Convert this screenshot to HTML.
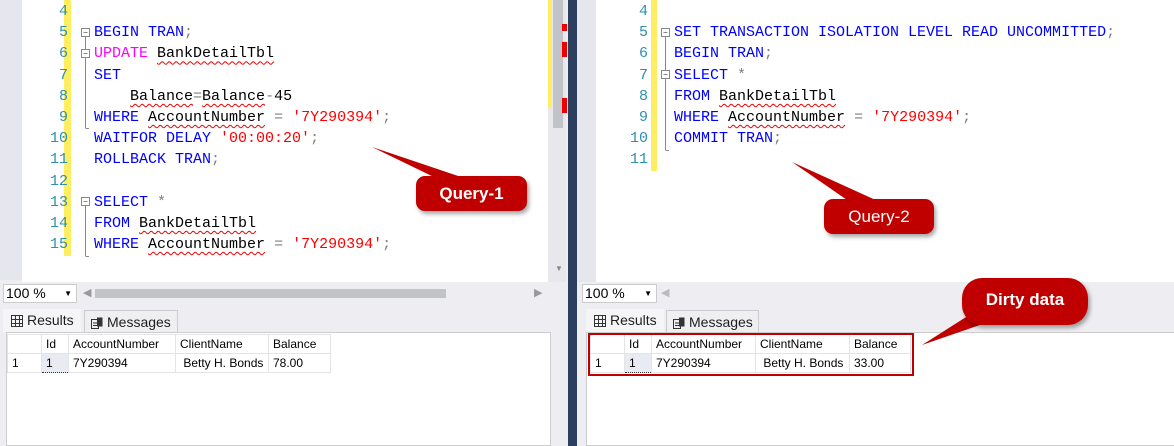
<!DOCTYPE html>
<html><head><meta charset="utf-8"><style>
*{margin:0;padding:0;box-sizing:border-box}
body{width:1174px;height:446px;overflow:hidden;background:#eeeef2;position:relative;font-family:"Liberation Sans",sans-serif}
.abs{position:absolute}
.code{font-family:"Liberation Mono",monospace;font-size:15px;line-height:21.2px;white-space:pre}
.ln{color:#2b91af;text-align:right}
.k{color:#0000ff}.m{color:#ff00ff}.s{color:#ff0000}.g{color:#808080}
.u{text-decoration:underline wavy #e00;text-decoration-thickness:1px;text-underline-offset:3px}
.tab{position:absolute;font-size:14px;color:#1e1e1e;border:1px solid #ccc;border-bottom:none;padding:3px 6px;background:#f5f5f5;white-space:nowrap;line-height:17px}
.tab svg{vertical-align:-2px;margin-right:4px}
table{border-collapse:collapse;font-size:12px;position:absolute}
td{border:1px solid #e4e4e4;height:19px;padding:0 4px;white-space:nowrap}
.callout{position:absolute;background:#c00000;color:#fff;font-size:17px;font-weight:bold;text-align:center;border-radius:9px;box-shadow:2px 3px 4px rgba(0,0,0,.35)}
</style></head><body>
<div class="abs" style="left:0;top:0;width:22px;height:280px;background:#e6e7ec"></div>
<div class="abs" style="left:22px;top:0;width:526px;height:282px;background:#fff"></div>
<div class="abs" style="left:64px;top:0;width:7px;height:256px;background:#ffee62"></div>
<div class="abs code ln" style="left:22px;top:1px;width:46px">4
5
6
7
8
9
10
11
12
13
14
15</div>
<div class="abs code" style="left:94px;top:1px">
<span class="k">BEGIN TRAN</span><span class="g">;</span>
<span class="m">UPDATE</span> <span class="u">BankDetailTbl</span>
<span class="k">SET</span>
    <span class="u">Balance</span><span class="g">=</span><span class="u">Balance</span><span class="g">-</span>45
<span class="k">WHERE</span> <span class="u">AccountNumber</span> <span class="g">=</span> <span class="s">'7Y290394'</span><span class="g">;</span>
<span class="k">WAITFOR DELAY</span> <span class="s">'00:00:20'</span><span class="g">;</span>
<span class="k">ROLLBACK TRAN</span><span class="g">;</span>

<span class="k">SELECT</span> <span class="g">*</span>
<span class="k">FROM</span> <span class="u">BankDetailTbl</span>
<span class="k">WHERE</span> <span class="u">AccountNumber</span> <span class="g">=</span> <span class="s">'7Y290394'</span><span class="g">;</span></div>
<svg class="abs" style="left:78px;top:0" width="14" height="260">
<g fill="#fff" stroke="#888">
<rect x="3.5" y="28.5" width="8" height="8"/><rect x="3.5" y="49.5" width="8" height="8"/><rect x="3.5" y="197.5" width="8" height="8"/></g>
<g stroke="#888"><line x1="5.5" y1="32.5" x2="9.5" y2="32.5"/><line x1="5.5" y1="53.5" x2="9.5" y2="53.5"/><line x1="5.5" y1="201.5" x2="9.5" y2="201.5"/>
<line x1="7.5" y1="37" x2="7.5" y2="49"/><line x1="7.5" y1="58" x2="7.5" y2="128"/><line x1="7.5" y1="128.5" x2="11" y2="128.5"/>
<line x1="7.5" y1="206" x2="7.5" y2="256"/><line x1="7.5" y1="256.5" x2="11" y2="256.5"/></g></svg>
<div class="abs" style="left:548px;top:0;width:18px;height:282px;background:#e8e8ec"></div>
<div class="abs" style="left:548px;top:0;width:4px;height:108px;background:#ffee62"></div>
<div class="abs" style="left:553px;top:0;width:10px;height:128px;background:#c2c3c9"></div>
<div class="abs" style="left:562px;top:24px;width:5px;height:7px;background:#e00"></div>
<div class="abs" style="left:562px;top:42px;width:5px;height:15px;background:#e00"></div>
<div class="abs" style="left:562px;top:98px;width:5px;height:15px;background:#e00"></div>
<div class="abs" style="left:555px;top:264px;color:#888;font-size:8px">▼</div>
<div class="abs" style="left:568px;top:0;width:9px;height:446px;background:#2d3f5f"></div>
<div class="abs" style="left:3px;top:284px;width:74px;height:19px;background:#fff;border:1px solid #ccc;font-size:14px;padding-left:2px;line-height:17px">100 %<span style="position:absolute;right:4px;font-size:8px">▼</span></div>
<div class="abs" style="left:83px;top:286px;color:#999;font-size:11px">◀</div>
<div class="abs" style="left:95px;top:289px;width:351px;height:9px;background:#c2c3c9"></div>
<div class="abs" style="left:534px;top:286px;color:#999;font-size:11px">▶</div>
<div class="tab" style="left:2px;top:308px;width:80px;height:24px;background:#f5f5f7;border-color:#eeeef2;padding-left:8px"><svg width="12" height="12"><rect x=".5" y=".5" width="11" height="11" fill="none" stroke="#333"/><path d="M0 4.5H12M0 8.5H12M4.5 0V12M8.5 0V12" stroke="#333"/></svg>Results</div>
<div class="tab" style="left:84px;top:310px;width:94px;height:22px;background:#efeff2"><svg width="12" height="12"><rect x=".5" y="2.5" width="7" height="9" fill="none" stroke="#333"/><rect x="6" y=".5" width="5.5" height="9" fill="#333"/><path d="M2 6H6M2 8.5H6" stroke="#333"/></svg>Messages</div>
<div class="abs" style="left:6px;top:332px;width:545px;height:114px;background:#fff;border:1px solid #ccc"></div>
<table style="left:7px;top:334px">
<tr><td style="width:34px"></td><td style="width:27px">Id</td><td style="width:107px">AccountNumber</td><td style="width:93px">ClientName</td><td style="width:62px">Balance</td></tr>
<tr><td>1</td><td style="background:#e8ecf2;border:1px dotted #333">1</td><td>7Y290394</td><td>&nbsp;Betty H. Bonds</td><td>78.00</td></tr></table>
<div class="abs" style="left:577px;top:0;width:19px;height:282px;background:#e6e7ec"></div>
<div class="abs" style="left:596px;top:0;width:578px;height:282px;background:#fff"></div>
<div class="abs" style="left:651px;top:0;width:6px;height:171px;background:#ffee62"></div>
<div class="abs code ln" style="left:596px;top:1px;width:52px">4
5
6
7
8
9
10
11</div>
<div class="abs code" style="left:674px;top:1px">
<span class="k">SET TRANSACTION ISOLATION LEVEL READ UNCOMMITTED</span><span class="g">;</span>
<span class="k">BEGIN TRAN</span><span class="g">;</span>
<span class="k">SELECT</span> <span class="g">*</span>
<span class="k">FROM</span> <span class="u">BankDetailTbl</span>
<span class="k">WHERE</span> <span class="u">AccountNumber</span> <span class="g">=</span> <span class="s">'7Y290394'</span><span class="g">;</span>
<span class="k">COMMIT TRAN</span><span class="g">;</span></div>
<svg class="abs" style="left:658px;top:0" width="14" height="180">
<g fill="#fff" stroke="#888"><rect x="3.5" y="28.5" width="8" height="8"/><rect x="3.5" y="70.5" width="8" height="8"/></g>
<g stroke="#888"><line x1="5.5" y1="32.5" x2="9.5" y2="32.5"/><line x1="5.5" y1="74.5" x2="9.5" y2="74.5"/>
<line x1="7.5" y1="37" x2="7.5" y2="70"/><line x1="7.5" y1="79" x2="7.5" y2="150"/><line x1="7.5" y1="150.5" x2="11" y2="150.5"/></g></svg>
<div class="abs" style="left:582px;top:284px;width:75px;height:19px;background:#fff;border:1px solid #ccc;font-size:14px;padding-left:2px;line-height:17px">100 %<span style="position:absolute;right:4px;font-size:8px">▼</span></div>
<div class="abs" style="left:661px;top:286px;color:#bbb;font-size:11px">◀</div>
<div class="tab" style="left:585px;top:308px;width:80px;height:24px;background:#f5f5f7;border-color:#eeeef2;padding-left:8px"><svg width="12" height="12"><rect x=".5" y=".5" width="11" height="11" fill="none" stroke="#333"/><path d="M0 4.5H12M0 8.5H12M4.5 0V12M8.5 0V12" stroke="#333"/></svg>Results</div>
<div class="tab" style="left:666px;top:310px;width:93px;height:22px;background:#efeff2"><svg width="12" height="12"><rect x=".5" y="2.5" width="7" height="9" fill="none" stroke="#333"/><rect x="6" y=".5" width="5.5" height="9" fill="#333"/><path d="M2 6H6M2 8.5H6" stroke="#333"/></svg>Messages</div>
<div class="abs" style="left:586px;top:332px;width:588px;height:114px;background:#fff;border:1px solid #ccc;border-right:none"></div>
<table style="left:590px;top:334px">
<tr><td style="width:34px"></td><td style="width:27px">Id</td><td style="width:104px">AccountNumber</td><td style="width:94px">ClientName</td><td style="width:61px">Balance</td></tr>
<tr><td>1</td><td style="background:#e8ecf2;border:1px dotted #333">1</td><td>7Y290394</td><td>&nbsp;Betty H. Bonds</td><td>33.00</td></tr></table>
<div class="abs" style="left:588px;top:333px;width:326px;height:43px;border:2px solid #c00000"></div>
<svg class="abs" style="left:0;top:0" width="1174" height="446">
<g fill="#c00000">
<polygon points="372,147 440,180 470,180"/>
<polygon points="792,162 850,202 880,202"/>
<polygon points="922,345 985,305 1000,318"/></g></svg>
<div class="callout" style="left:416px;top:176px;width:111px;height:35px;line-height:35px">Query-1</div>
<div class="callout" style="left:824px;top:199px;width:110px;height:35px;line-height:35px;font-weight:normal">Query-2</div>
<div class="callout" style="left:962px;top:278px;width:126px;height:47px;line-height:44px;border-radius:20px">Dirty data</div>
</body></html>
